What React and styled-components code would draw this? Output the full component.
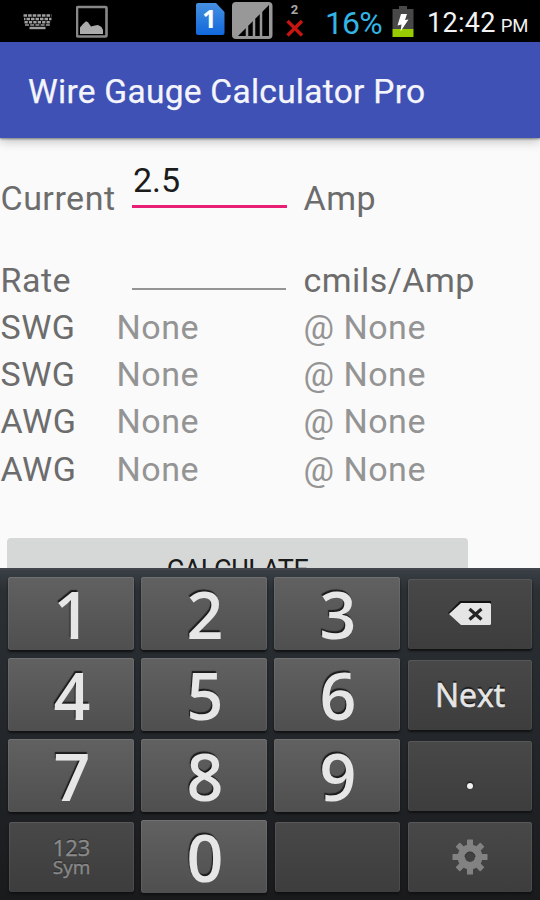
import React from 'react'
import styled, { createGlobalStyle } from 'styled-components'

const GlobalStyle = createGlobalStyle`
  * {
    box-sizing: border-box;
  }

  body {
    margin: 0;
    background: #fafafa;
  }
`

const Screen = styled.div`
  width: 540px;
  height: 900px;
  display: flex;
  flex-direction: column;
  overflow: hidden;
  background: #fafafa;
  font-family: Roboto, 'Liberation Sans', sans-serif;
`

const StatusBar = styled.header`
  flex: none;
  height: 42px;
  display: flex;
  align-items: flex-start;
  background: #000;
  white-space: nowrap;

  svg {
    display: block;
    flex: none;
  }
`

const Battery = styled.span`
  width: 60px;
  margin-left: 17px;
  padding-top: 4px;
  color: #33b5e5;
  font-size: 32px;
  line-height: 38px;
  letter-spacing: -0.9px;
`

const Clock = styled.span`
  margin-left: 12px;
  padding-top: 4px;
  color: #f2f2f2;
  font-size: 27px;
  line-height: 38px;
  letter-spacing: 0.3px;
`

const Meridiem = styled.small`
  margin-left: 5px;
  font-size: 18.5px;
  letter-spacing: -0.1px;
`

const AppBar = styled.div`
  flex: none;
  z-index: 1;
  height: 96px;
  display: flex;
  align-items: center;
  padding: 4px 0 0 28px;
  background: #3f51b5;
  box-shadow: 0 1px 2px rgba(0, 0, 0, 0.4), 0 3px 10px rgba(0, 0, 0, 0.25);
`

const Title = styled.h1`
  margin: 0;
  color: #f4f5fb;
  font-size: 33.5px;
  font-weight: 400;
  line-height: 40px;
  letter-spacing: 0.27px;
  white-space: nowrap;
  -webkit-text-stroke: 0.25px #f4f5fb;
`

const Form = styled.main`
  flex: none;
  height: 430px;
  display: flex;
  flex-direction: column;
  align-items: flex-start;
  padding-top: 20px;
  overflow: hidden;
`

const Row = styled.div`
  flex: none;
  display: grid;
  grid-template-columns: ${({ field }) => (field ? '132px 171px' : '116px 187px')} auto;
  height: ${({ height }) => height}px;
  align-items: ${({ field }) => (field ? 'stretch' : 'center')};
`

const Label = styled.span`
  padding: ${({ top }) => top || 0}px 0 0 0.5px;
  color: ${({ muted }) => (muted ? '#949494' : '#6c6c6c')};
  font-size: 34px;
  line-height: 40px;
  letter-spacing: 0.5px;
  white-space: nowrap;
`

const Field = styled.div`
  width: ${({ focused }) => (focused ? 155 : 154)}px;
  height: 50px;
  padding-left: 1px;
  border-bottom: ${({ focused }) => (focused ? '3px solid #e91e75' : '2px solid #949494')};
  color: #1c1c1c;
  font-size: 34px;
  line-height: 44px;
`

const Calculate = styled.button`
  flex: none;
  width: 461px;
  height: 72px;
  margin: 46px 0 0 7px;
  padding: 0;
  border: none;
  border-radius: 4px;
  background: #d6d7d7;
  color: #1a1a1a;
  font-family: inherit;
  font-size: 27px;
  font-weight: 400;
  line-height: 54px;
  letter-spacing: -0.5px;

  span {
    display: block;
    height: 62px;
  }
`

const Keyboard = styled.section`
  flex: none;
  height: 332px;
  display: grid;
  grid-template-columns: 126px 126px 126px 125px;
  grid-auto-rows: 73px;
  gap: 8px 7px;
  padding: 7px 0 0 8px;
  border-top: 2px solid #42464c;
  background: linear-gradient(#3a3f45 0, #2b3035 20px, #24282c 45%, #191a1c 100%);
  font-family: 'Open Sans', 'Noto Sans', sans-serif;
`

const Key = styled.button`
  display: flex;
  flex-direction: column;
  align-items: center;
  justify-content: center;
  margin: ${({ dark }) => (dark ? '2px 0 1px 1px' : '0')};
  padding: 0;
  border: none;
  border-radius: 3px;
  background: ${({ dark }) =>
    dark ? 'linear-gradient(#484848, #3d3d3d)' : 'linear-gradient(#616161, #4f4f4f)'};
  box-shadow: inset 0 1px ${({ dark }) => (dark ? '#575757' : '#707070')},
    inset 1px 0 rgba(255, 255, 255, 0.07), inset -1px 0 rgba(255, 255, 255, 0.07),
    0 2px 2px #101112;
  color: #e6e6e6;
  font-family: inherit;
`

const Digit = styled.span`
  padding: 1px 0 0 2px;
  font-size: 64.5px;
  font-weight: 600;
  line-height: 71px;
  text-shadow: -1px -2px 1px #1b1b1b;
`

const Action = styled.span`
  font-size: 32px;
  line-height: 40px;
  text-shadow: 0 -2px 1px #161616;
  -webkit-text-stroke: 0.6px #e6e6e6;
`

const Dot = styled.span`
  width: 6px;
  height: 6px;
  margin-top: 19px;
  border-radius: 50%;
  background: #f2f2f2;
  box-shadow: 0 -1px 2px #111;
`

const Mode = styled.span`
  color: #8a8a8a;
  font-size: ${({ size }) => size}px;
  line-height: 20px;
  text-shadow: 0 -1px 1px #222;
  -webkit-text-stroke: 0.4px #8a8a8a;
`

const KeyboardIcon = () => (
  <svg width="76" height="42" viewBox="0 0 76 42">
    <g stroke="#a0a0a0" strokeWidth="2.6" fill="none">
      <path d="M23.5 15.5H51.5" strokeDasharray="3.6 1" />
      <path d="M24 19H51.5" strokeDasharray="3.5 1" strokeDashoffset="2" />
      <path d="M24.5 22.2H51" strokeDasharray="3.3 1.1" />
      <path d="M25 25H50" strokeDasharray="4 1.2" strokeWidth="1.6" />
      <path d="M29.5 28H45.5" strokeWidth="2.4" />
    </g>
  </svg>
)

const PictureIcon = () => (
  <svg width="120" height="42" viewBox="76 0 120 42">
    <rect x="77" y="7" width="29.5" height="29.5" rx="1" fill="none" stroke="#888" strokeWidth="2.6" />
    <path d="M80 34V27.5L83 24L86 21.2L88 22.2L91 26.4L95 25.5L98 25L101.5 27L103 30V34Z" fill="#ababab" />
  </svg>
)

const SimIcon = () => (
  <svg width="34" height="42" viewBox="196 0 34 42">
    <defs>
      <linearGradient id="sim" x2="0" y2="1">
        <stop stopColor="#4690e0" />
        <stop offset="1" stopColor="#1268dc" />
      </linearGradient>
    </defs>
    <path d="M198 3H216L224.5 12V33Q224.5 35 222.5 35H198Q196 35 196 33V5Q196 3 198 3Z" fill="url(#sim)" />
    <text x="209.5" y="28" textAnchor="middle" fill="#fff" fontFamily="Open Sans" fontSize="25" fontWeight="700">
      1
    </text>
  </svg>
)

const SignalIcon = () => (
  <svg width="50" height="42" viewBox="230 0 50 42">
    <rect x="232" y="2" width="40.5" height="37" rx="4" fill="#989898" />
    <path d="M238 36L269 5V36Z" fill="#000" />
    <path d="M247 26V36M254 19V36M261 11V36" stroke="#989898" strokeWidth="2.5" />
  </svg>
)

const NoSimIcon = () => (
  <svg width="28" height="42" viewBox="280 0 28 42">
    <text x="294.5" y="14" textAnchor="middle" fill="#a8a8a8" fontFamily="Roboto" fontSize="13" fontWeight="700">
      2
    </text>
    <path d="M287.5 21L302 35.5M302 21L287.5 35.5" stroke="#c51612" strokeWidth="3.4" />
  </svg>
)

const BatteryIcon = () => (
  <svg width="30" height="42" viewBox="385 0 30 42">
    <path d="M399 6H407V9H413.5V29H392.5V9H399Z" fill="#484848" />
    <path d="M392.5 29H413.5V37H392.5Z" fill="#99cc00" />
    <path d="M401 14L407 14L405 20L408.5 19.5L400.5 31.5L401.5 24.5L397.5 25.5Z" fill="#fff" />
  </svg>
)

const BackspaceIcon = () => (
  <svg width="44" height="26" viewBox="0 0 44 26">
    <path d="M0 12L12 0H43V3H14L3 14Z" fill="#111" />
    <path d="M1 13L13 2H41.5Q43 2 43 3.5V22.5Q43 24 41.5 24H13Z" fill="#e5e5e5" />
    <path d="M21.5 8L33.5 18.5M33.5 8L21.5 18.5" stroke="#242424" strokeWidth="3.2" />
  </svg>
)

const GearIcon = () => (
  <svg width="38" height="38" viewBox="-19 -19 38 38">
    <g fill="#828282">
      {[0, 45, 90, 135].map(angle => (
        <rect key={angle} x="-3" y="-17.5" width="6" height="35" rx="0.5" transform={`rotate(${angle})`} />
      ))}
      <circle r="12.5" />
    </g>
    <circle r="5" fill="#414141" />
    <path d="M-5 0A5 5 0 0 1 5 0" fill="none" stroke="#303030" />
  </svg>
)

const results = ['SWG', 'SWG', 'AWG', 'AWG']

const NumberKey = ({ value }) => (
  <Key>
    <Digit>{value}</Digit>
  </Key>
)

const App = () => (
  <Screen>
    <GlobalStyle />
    <StatusBar>
      <KeyboardIcon />
      <PictureIcon />
      <SimIcon />
      <SignalIcon />
      <NoSimIcon />
      <Battery>16%</Battery>
      <BatteryIcon />
      <Clock>
        12:42<Meridiem>PM</Meridiem>
      </Clock>
    </StatusBar>
    <AppBar>
      <Title>Wire Gauge Calculator Pro</Title>
    </AppBar>
    <Form>
      <Row field height={82}>
        <Label top={20}>Current</Label>
        <Field focused>2.5</Field>
        <Label top={20}>Amp</Label>
      </Row>
      <Row field height={63.5}>
        <Label top={20}>Rate</Label>
        <Field />
        <Label top={20}>cmils/Amp</Label>
      </Row>
      {results.map((gauge, index) => (
        <Row key={index} height={47.2}>
          <Label>{gauge}</Label>
          <Label muted>None</Label>
          <Label muted>@ None</Label>
        </Row>
      ))}
      <Calculate>
        <span>CALCULATE</span>
      </Calculate>
    </Form>
    <Keyboard>
      <NumberKey value="1" />
      <NumberKey value="2" />
      <NumberKey value="3" />
      <Key dark>
        <BackspaceIcon />
      </Key>
      <NumberKey value="4" />
      <NumberKey value="5" />
      <NumberKey value="6" />
      <Key dark>
        <Action>Next</Action>
      </Key>
      <NumberKey value="7" />
      <NumberKey value="8" />
      <NumberKey value="9" />
      <Key dark>
        <Dot />
      </Key>
      <Key dark>
        <Mode size={22}>123</Mode>
        <Mode size={19}>Sym</Mode>
      </Key>
      <NumberKey value="0" />
      <Key dark />
      <Key dark>
        <GearIcon />
      </Key>
    </Keyboard>
  </Screen>
)

export default App
